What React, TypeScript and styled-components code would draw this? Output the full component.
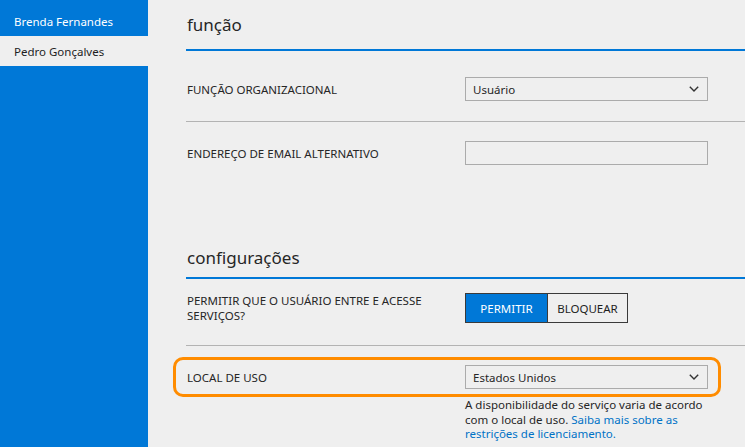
import React from "react";
import styled, { createGlobalStyle } from "styled-components";

const GlobalStyle = createGlobalStyle`
  html, body {
    margin: 0;
    padding: 0;
    background: #efefef;
  }
  body {
    font-family: "Noto Sans", "Open Sans", Arial, sans-serif;
    color: #262626;
  }
`;

const Page = styled.div`
  display: flex;
  width: 745px;
  height: 447px;
  overflow: hidden;
  background: #efefef;
`;

const Sidebar = styled.nav`
  width: 148px;
  flex-shrink: 0;
  display: flex;
  flex-direction: column;
  background: #0078d7;
`;

const UserItem = styled.div<{ $active?: boolean }>`
  display: flex;
  align-items: center;
  height: ${(p) => (p.$active ? "36px" : "30px")};
  padding: ${(p) => (p.$active ? "6px 0 0 14px" : "0 0 0 14px")};
  box-sizing: border-box;
  font-size: 11.5px;
  background: ${(p) => (p.$active ? "#0078d7" : "#efefef")};
  color: ${(p) => (p.$active ? "#ffffff" : "#1e1e1e")};
`;

const Main = styled.main`
  flex: 1;
  padding-left: 38px;
  display: flex;
  flex-direction: column;
`;

const SectionTitle = styled.h2<{ $top: number; $bottom: number }>`
  margin: 0;
  padding: ${(p) => `${p.$top}px 0 ${p.$bottom}px 1px`};
  font-size: 17px;
  font-weight: 400;
  line-height: 24px;
  color: #262626;
  border-bottom: 2px solid #0078d7;
`;

const Row = styled.div<{ $top: number; $bottom: number; $divider?: boolean }>`
  position: relative;
  display: grid;
  grid-template-columns: 279px 243px;
  align-items: start;
  padding: ${(p) => `${p.$top}px 0 ${p.$bottom}px 0`};
  border-bottom: ${(p) => (p.$divider ? "1px solid #b3b3b3" : "none")};
`;

const Label = styled.div<{ $height: number }>`
  min-height: ${(p) => p.$height}px;
  display: flex;
  align-items: center;
  padding-left: 1px;
  font-size: 11.5px;
  line-height: 15px;
  text-transform: uppercase;
  color: #262626;
`;

const Control = styled.div`
  display: flex;
  flex-direction: column;
`;

const SelectBox = styled.div`
  height: 24px;
  box-sizing: border-box;
  border: 1px solid #ababab;
  background: #efefef;
  display: flex;
  align-items: center;
  justify-content: space-between;
  padding: 0 8px 0 7px;
  font-size: 11.5px;
  color: #262626;
`;

const TextBox = styled.div`
  height: 24px;
  box-sizing: border-box;
  border: 1px solid #ababab;
  background: #efefef;
`;

const Toggle = styled.div`
  display: flex;
  width: 163px;
  height: 30px;
  box-sizing: border-box;
  border: 1px solid #3a3a3a;
`;

const ToggleButton = styled.div<{ $on?: boolean }>`
  flex: ${(p) => (p.$on ? "0 0 81px" : "1")};
  display: flex;
  align-items: center;
  justify-content: center;
  font-size: 11.5px;
  background: ${(p) => (p.$on ? "#0078d7" : "#efefef")};
  color: ${(p) => (p.$on ? "#ffffff" : "#1e1e1e")};
  border-right: ${(p) => (p.$on ? "1px solid #3a3a3a" : "none")};
`;

const HelpText = styled.p`
  margin: 9px 0 0 0;
  font-size: 11.5px;
  line-height: 14.5px;
  color: #262626;
`;

const Link = styled.a`
  color: #0072c6;
  text-decoration: none;
`;

const Highlight = styled.div`
  position: absolute;
  left: -13px;
  right: 24px;
  top: 11px;
  height: 40px;
  box-sizing: border-box;
  border: 3px solid #ff8c00;
  border-radius: 10px;
  pointer-events: none;
`;

const Chevron = () => (
  <svg width="10" height="6" viewBox="0 0 10 6" fill="none">
    <path d="M0.8 0.8 L5 5 L9.2 0.8" stroke="#333" strokeWidth="1.4" />
  </svg>
);

export default function App() {
  return (
    <>
      <GlobalStyle />
      <Page>
        <Sidebar>
          <UserItem $active>Brenda Fernandes</UserItem>
          <UserItem>Pedro Gonçalves</UserItem>
        </Sidebar>
        <Main>
          <SectionTitle $top={13} $bottom={12}>função</SectionTitle>
          <Row $top={26} $bottom={20} $divider>
            <Label $height={24}>Função organizacional</Label>
            <Control>
              <SelectBox>
                Usuário
                <Chevron />
              </SelectBox>
            </Control>
          </Row>
          <Row $top={19} $bottom={0}>
            <Label $height={24}>Endereço de email alternativo</Label>
            <Control>
              <TextBox />
            </Control>
          </Row>
          <SectionTitle $top={81} $bottom={7}>configurações</SectionTitle>
          <Row $top={14} $bottom={22} $divider>
            <Label $height={30}>Permitir que o usuário entre e acesse serviços?</Label>
            <Control>
              <Toggle>
                <ToggleButton $on>PERMITIR</ToggleButton>
                <ToggleButton>BLOQUEAR</ToggleButton>
              </Toggle>
            </Control>
          </Row>
          <Row $top={19} $bottom={0}>
            <Highlight />
            <Label $height={24}>Local de uso</Label>
            <Control>
              <SelectBox>
                Estados Unidos
                <Chevron />
              </SelectBox>
              <HelpText>
                A disponibilidade do serviço varia de acordo com o local de uso.{" "}
                <Link href="#">Saiba mais sobre as restrições de licenciamento.</Link>
              </HelpText>
            </Control>
          </Row>
        </Main>
      </Page>
    </>
  );
}
